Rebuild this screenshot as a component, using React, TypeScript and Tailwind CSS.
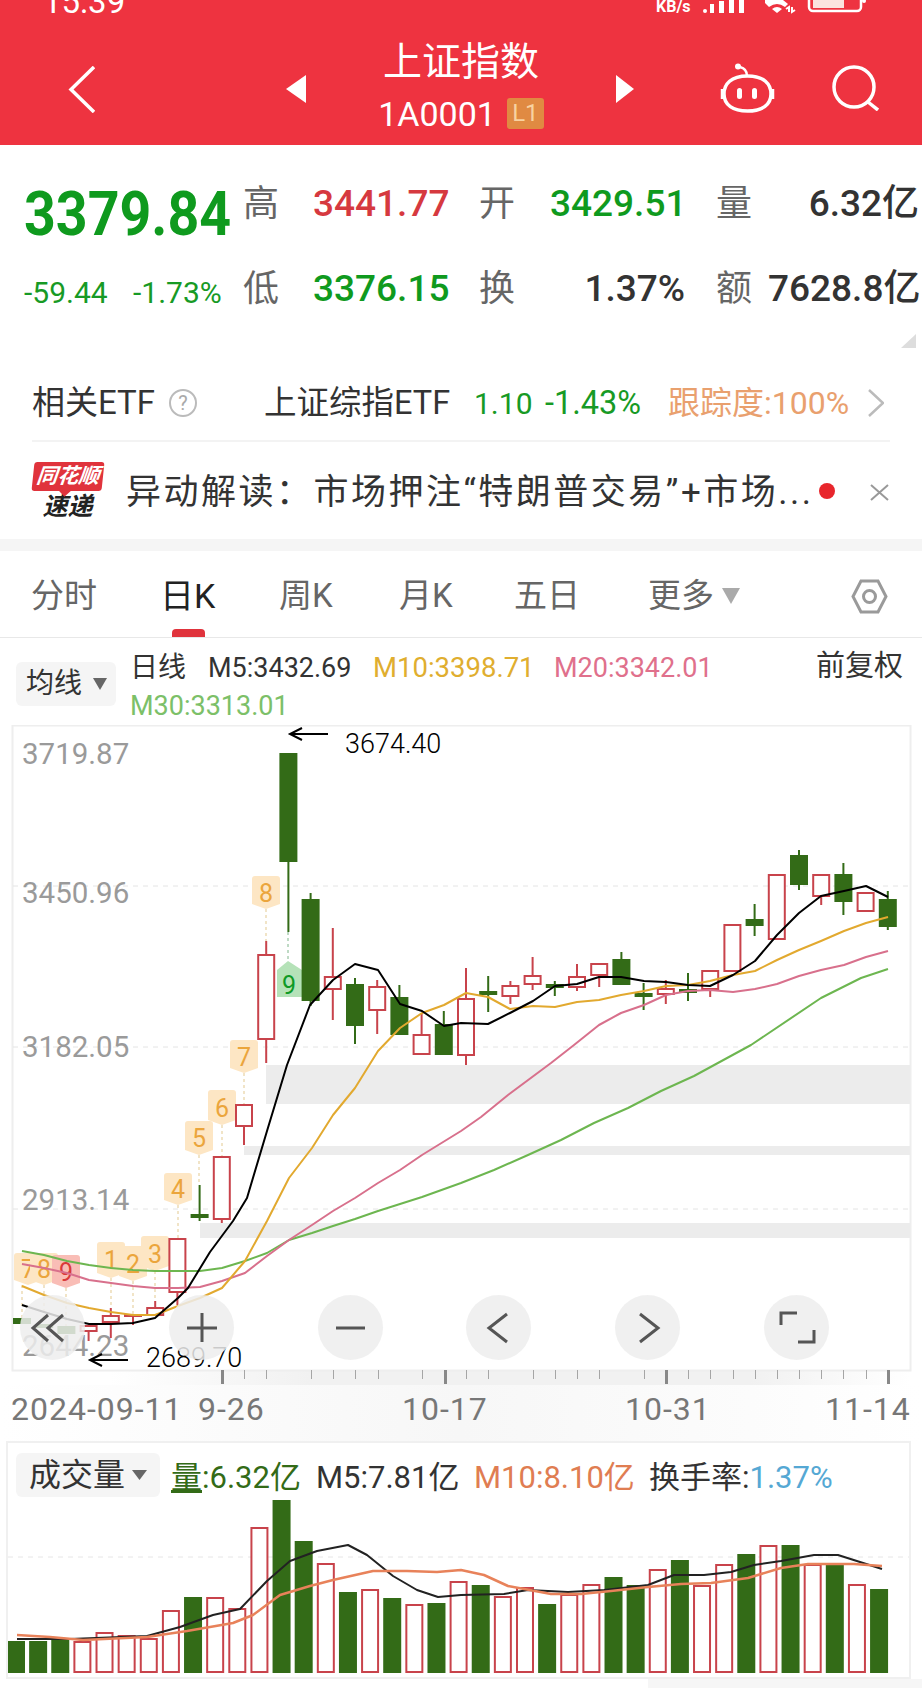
import React from 'react';

const RED = '#c8434b';
const GREEN = '#336b17';

// [kind, bodyTop, bodyBottom, wickTop, wickBottom] in page pixels
type Candle = ['r' | 'g', number, number, number, number];

const candles: Candle[] = [
  ['g', 1320, 1326, 1320, 1326],
  ['g', 1326, 1330, 1326, 1330],
  ['g', 1328, 1336, 1328, 1336],
  ['r', 1327, 1334, 1327, 1343],
  ['r', 1317, 1325, 1310, 1340],
  ['r', 1316, 1318, 1316, 1327],
  ['r', 1309, 1318, 1303, 1318],
  ['r', 1240, 1295, 1240, 1307],
  ['g', 1216, 1220, 1187, 1223],
  ['r', 1158, 1222, 1158, 1225],
  ['r', 1106, 1129, 1106, 1147],
  ['r', 956, 1042, 943, 1065],
  ['g', 755, 864, 755, 934],
  ['g', 901, 1003, 895, 1008],
  ['r', 978, 992, 930, 1022],
  ['g', 986, 1028, 980, 1046],
  ['r', 988, 1013, 982, 1036],
  ['g', 999, 1037, 987, 1037],
  ['r', 1036, 1057, 1015, 1057],
  ['g', 1026, 1057, 1013, 1057],
  ['r', 1000, 1058, 970, 1067],
  ['g', 993, 997, 978, 1014],
  ['r', 987, 999, 983, 1006],
  ['r', 977, 987, 959, 992],
  ['g', 986, 990, 983, 998],
  ['r', 978, 990, 966, 993],
  ['r', 965, 978, 965, 989],
  ['g', 961, 987, 954, 987],
  ['g', 995, 999, 985, 1012],
  ['r', 990, 997, 982, 1006],
  ['g', 991, 995, 975, 1003],
  ['r', 972, 992, 972, 999],
  ['r', 926, 974, 926, 974],
  ['g', 921, 928, 906, 938],
  ['r', 876, 942, 876, 942],
  ['g', 857, 887, 852, 892],
  ['r', 876, 899, 876, 907],
  ['g', 876, 904, 865, 917],
  ['r', 894, 914, 894, 914],
  ['g', 901, 929, 893, 932],
];

const m5 = '22,1307 44,1314 67,1321 89,1326 111,1326 133,1325 155,1320 178,1300 188,1290 210,1254 233,1223 247,1200 267,1133 287,1067 310,1007 333,982 355,966 378,972 400,1006 422,1013 444,1028 461,1025 488,1026 510,1015 533,1003 555,988 577,986 599,979 621,979 644,983 666,984 688,987 710,988 733,977 755,963 777,937 799,915 821,898 844,893 866,888 888,899';
const m10 = '22,1288 44,1297 67,1305 89,1310 111,1314 133,1317 155,1317 178,1308 200,1300 222,1290 245,1263 267,1223 289,1180 312,1150 333,1117 355,1090 378,1053 400,1030 422,1015 444,1007 466,995 488,999 510,1011 533,1008 555,1009 577,1004 599,1002 621,997 644,993 666,988 688,987 710,983 733,977 755,973 777,962 799,952 821,943 844,933 866,925 888,919';
const m20 = '22,1266 44,1270 67,1275 89,1282 111,1285 133,1288 155,1290 178,1290 200,1289 222,1283 245,1275 267,1258 289,1242 312,1227 333,1213 355,1200 378,1185 400,1172 422,1157 461,1133 481,1119 508,1097 551,1065 574,1047 599,1027 621,1015 644,1007 666,997 688,993 710,992 733,994 755,991 777,986 799,978 821,972 844,967 866,959 888,953';
const m30 = '22,1253 44,1257 67,1263 89,1267 111,1270 133,1272 155,1273 178,1273 200,1273 222,1270 245,1263 267,1255 289,1242 312,1235 333,1228 355,1221 378,1213 400,1206 422,1199 461,1185 494,1172 528,1157 561,1142 594,1125 628,1110 661,1093 694,1078 751,1047 821,1000 861,980 888,971';

// [number, centre x, top, bottom, connector x, connector end]
const badges: [string, number, number, number, number, number][] = [
  ['7', 28, 1255, 1287, 22, 1320],
  ['8', 44, 1255, 1287, 44, 1322],
  ['1', 111, 1244, 1280, 111, 1310],
  ['2', 133, 1248, 1283, 133, 1316],
  ['3', 155, 1238, 1273, 155, 1303],
  ['4', 178, 1175, 1207, 178, 1240],
  ['5', 199, 1123, 1157, 199, 1187],
  ['6', 222, 1092, 1127, 222, 1158],
  ['7', 244, 1042, 1075, 244, 1106],
  ['8', 266, 878, 911, 266, 943],
];

const axisLabels: [string, number][] = [
  ['3719.87', 766],
  ['3450.96', 905],
  ['3182.05', 1059],
  ['2913.14', 1212],
  ['2644.23', 1358],
];

const thinTicks = [244, 266, 311, 333, 355, 378, 422, 466, 488, 533, 555, 577, 599, 644, 688, 710, 733, 755, 777, 799, 821, 843, 866];
const thickTicks = [222, 445, 666, 888];

const volumes: ['r' | 'g', number][] = [
  ['g', 1643], ['g', 1643], ['g', 1642], ['r', 1643], ['r', 1634], ['r', 1637], ['r', 1640], ['r', 1612],
  ['g', 1599], ['r', 1599], ['r', 1610], ['r', 1529], ['g', 1502], ['g', 1543], ['r', 1565], ['g', 1594],
  ['r', 1591], ['g', 1600], ['r', 1606], ['g', 1605], ['r', 1583], ['g', 1587], ['r', 1598], ['r', 1589],
  ['g', 1606], ['r', 1596], ['r', 1586], ['g', 1579], ['g', 1587], ['r', 1571], ['g', 1562], ['r', 1587],
  ['r', 1566], ['g', 1556], ['r', 1547], ['g', 1547], ['r', 1566], ['g', 1567], ['r', 1586], ['g', 1591],
];

const volM5 = '17,1641 70,1641 147,1638 180,1629 213,1617 240,1611 267,1583 290,1563 317,1553 348,1547 367,1557 393,1578 417,1592 438,1599 461,1597 504,1596 528,1592 568,1594 604,1592 648,1587 674,1577 704,1577 731,1574 754,1567 781,1563 814,1557 838,1557 882,1571';
const volM10 = '17,1637 50,1639 83,1642 147,1639 187,1633 233,1625 253,1617 280,1597 310,1588 333,1582 373,1573 407,1573 437,1574 461,1572 484,1577 508,1588 551,1596 581,1596 611,1593 648,1589 681,1586 711,1585 748,1580 781,1570 808,1566 854,1566 882,1568';

function CircleButton({ children }: { children: React.ReactNode }) {
  return (
    <div className="w-[65px] h-[65px] rounded-full bg-[#ededed]/85 flex items-center justify-center">
      <svg width="65" height="65" viewBox="0 0 65 65" fill="none" stroke="#555" strokeWidth="3">
        {children}
      </svg>
    </div>
  );
}

function Badge({ n, cx, top, bottom, fill, color }: { n: string; cx: number; top: number; bottom: number; fill: string; color: string }) {
  const w = 14;
  return (
    <g>
      <path
        d={`M${cx - w + 3} ${top} H${cx + w - 3} Q${cx + w} ${top} ${cx + w} ${top + 3} V${bottom - 5} L${cx} ${bottom} L${cx - w} ${bottom - 5} V${top + 3} Q${cx - w} ${top} ${cx - w + 3} ${top} Z`}
        fill={fill}
      />
      <text x={cx} y={(top + bottom) / 2 + 9} textAnchor="middle" fill={color} className="text-[25px]">
        {n}
      </text>
    </g>
  );
}

function KChart() {
  return (
    <div className="relative h-[660px]">
      <svg width="922" height="660" viewBox="0 727 922 660" className="block">
        <defs>
          <linearGradient id="axisFade" x1="0" x2="1" y1="0" y2="0">
            <stop offset="0" stopColor="#f1f1f1" stopOpacity="0" />
            <stop offset="0.25" stopColor="#f1f1f1" />
            <stop offset="0.8" stopColor="#f1f1f1" />
            <stop offset="1" stopColor="#f1f1f1" stopOpacity="0" />
          </linearGradient>
        </defs>
        <rect x="110" y="1373" width="800" height="14" fill="url(#axisFade)" />
        <rect x="12.5" y="727.5" width="898" height="645" fill="none" stroke="#eeeeee" strokeWidth="2" />

        {[888, 1049, 1211].map((y) => (
          <line key={y} x1="13" x2="910" y1={y} y2={y} stroke="#e4e4e4" strokeDasharray="5 5" />
        ))}

        <rect x="266" y="1067" width="644" height="39" fill="#ececec" />
        <rect x="244" y="1148" width="666" height="9" fill="#ececec" />
        <rect x="200" y="1225" width="710" height="15" fill="#ececec" />

        {axisLabels.map(([t, y]) => (
          <text key={t} x="22" y={y} fill="#9a9a9a" className="text-[29.5px]">
            {t}
          </text>
        ))}

        {badges.map(([, , , bottom, lineX, end], i) => (
          <line key={i} x1={lineX} x2={lineX} y1={bottom} y2={end} stroke="#e3c98f" strokeDasharray="3 3" />
        ))}
        <line x1="66" x2="66" y1="1290" y2="1328" stroke="#e3c98f" strokeDasharray="3 3" />
        <line x1="288" x2="288" y1="934" y2="963" stroke="#7fb58a" strokeDasharray="3 3" />

        {badges.map(([n, cx, top, bottom], i) => (
          <Badge key={i} n={n} cx={cx} top={top} bottom={bottom} fill="#fde6c4" color="#eba53c" />
        ))}
        <Badge n="9" cx={66} top={1257} bottom={1290} fill="#f9bdb6" color="#d93a3a" />

        <path d="M277 999 V972 L288 963 L302 972 V999 Z" fill="#b5e2b8" />
        <text x="289" y="996" textAnchor="middle" fill="#0f9a25" className="text-[25px]">
          9
        </text>

        {candles.map(([kind, top, bottom, wickTop, wickBottom], i) => {
          const x = 22 + 22.2 * i;
          const color = kind === 'r' ? RED : GREEN;
          return (
            <g key={i}>
              <rect x={x - 1} y={wickTop} width="2" height={wickBottom - wickTop} fill={color} />
              {kind === 'r' ? (
                <rect x={x - 8} y={top + 1} width="16" height={Math.max(bottom - top - 2, 1)} fill="#fff" stroke={color} strokeWidth="2" />
              ) : (
                <rect x={x - 9} y={top} width="18" height={bottom - top} fill={color} />
              )}
            </g>
          );
        })}

        <polyline points={m30} fill="none" stroke="#6db650" strokeWidth="2" strokeLinejoin="round" />
        <polyline points={m20} fill="none" stroke="#d8708c" strokeWidth="2" strokeLinejoin="round" />
        <polyline points={m10} fill="none" stroke="#e2a92f" strokeWidth="2" strokeLinejoin="round" />
        <polyline points={m5} fill="none" stroke="#000" strokeWidth="2" strokeLinejoin="round" />

        <g fill="none" stroke="#000" strokeWidth="2">
          <path d="M328 736 H291 M302 730 L290 736 L302 742" />
          <path d="M128 1362 H91 M102 1356 L90 1362 L102 1368" />
        </g>
        <text x="345" y="755" fill="#000" className="text-[27px] font-light">
          3674.40
        </text>
        <text x="146" y="1369" fill="#000" className="text-[27px] font-light">
          2689.70
        </text>

        {thinTicks.map((x) => (
          <rect key={x} x={x} y="1372" width="1" height="9" fill="#a5a5a5" />
        ))}
        {thickTicks.map((x) => (
          <rect key={x} x={x - 1} y="1372" width="3" height="14" fill="#888" />
        ))}
      </svg>

      {/* controls float over the candles */}
      <div className="absolute left-[20px] top-[570px] w-[809px] flex justify-between">
        <CircleButton>
          <path d="M28 20 L13 33 L28 46 M43 20 L28 33 L43 46" />
        </CircleButton>
        <CircleButton>
          <path d="M33 18 V47 M18 33 H48" />
        </CircleButton>
        <CircleButton>
          <path d="M18 33 H47" />
        </CircleButton>
        <CircleButton>
          <path d="M41 19 L23 33 L41 47" />
        </CircleButton>
        <CircleButton>
          <path d="M25 19 L43 33 L25 47" />
        </CircleButton>
        <CircleButton>
          <path d="M17 30 V18 H33 M50 35 V47 H34" />
        </CircleButton>
      </div>
    </div>
  );
}

function VolumeChart() {
  return (
    <svg width="901" height="183" viewBox="8 1498 901 183" className="block">
      <line x1="8" x2="909" y1="1559" y2="1559" stroke="#e6e6e6" strokeDasharray="5 5" />
      {volumes.map(([kind, top], i) => {
        const x = 16 + 22.13 * i;
        return kind === 'g' ? (
          <rect key={i} x={x - 9} y={top} width="18" height={1675 - top} fill={GREEN} />
        ) : (
          <rect key={i} x={x - 8} y={top + 1} width="16" height={1673 - top} fill="#fff" stroke={RED} strokeWidth="2" />
        );
      })}
      <polyline points={volM5} fill="none" stroke="#222" strokeWidth="2" strokeLinejoin="round" />
      <polyline points={volM10} fill="none" stroke="#e8825a" strokeWidth="2.5" strokeLinejoin="round" />
    </svg>
  );
}

export default function App() {
  return (
    <div className="w-[922px] h-[1690px] overflow-hidden bg-white text-[#333] font-[Roboto,'Noto_Sans_CJK_SC',sans-serif]">
      {/* red header */}
      <header className="h-[145px] bg-[#ee3340] text-white">
        <div className="h-[14px] overflow-hidden flex items-end pl-[43px]">
          <span className="text-[33px] leading-[33px] w-[613px] mb-[-4px] whitespace-nowrap">15:39</span>
          <span className="text-[16px] leading-[16px] font-bold w-[47px] mb-[-1px]">KB/s</span>
          <svg width="165" height="14" viewBox="0 0 165 14" fill="#fff">
            <rect x="0" y="9" width="4" height="4" rx="2" />
            <rect x="7" y="4" width="4" height="9" />
            <rect x="16" y="1" width="5" height="12" />
            <rect x="26" y="0" width="5" height="13" />
            <rect x="36" y="0" width="5" height="13" />
            <path d="M62 0 H80 L85 4 L82 7 Q74 1 66 7 L62 3 Z" />
            <path d="M69 9 Q74 5 79 9 L74 13 Z" />
            <path d="M86 12 V7 L83 9 M89 7 V12 L92 10" fill="none" stroke="#fff" strokeWidth="2" />
            <rect x="106" y="-8" width="52" height="19" rx="4" fill="none" stroke="#fff" strokeWidth="2.5" />
            <rect x="110" y="-4" width="31" height="12" fill="#fbe3df" />
            <circle cx="161" cy="1" r="2" />
          </svg>
        </div>
        <nav className="h-[131px] pt-[19px] pl-[68px] flex items-center">
          <svg width="27" height="47" viewBox="0 0 27 47" fill="none" stroke="#fff" strokeWidth="3.5">
            <path d="M26 1 L3 23.5 L26 46" />
          </svg>
          <svg className="ml-[191px]" width="20" height="28" viewBox="0 0 20 28" fill="#fff">
            <path d="M20 0 V28 L0 14 Z" />
          </svg>
          <div className="w-[310px] flex flex-col items-center">
            <div className="text-[39px] leading-[46px] h-[57px] -mt-[8px]">上证指数</div>
            <div className="flex items-center gap-[11px] h-[36px]">
              <span className="text-[34px] leading-[36px]">1A0001</span>
              <span className="w-[37px] h-[31px] rounded-[3px] bg-[#e08a42] text-[#f8d2a0] text-[24px] leading-[31px] text-center">L1</span>
            </div>
          </div>
          <svg width="18" height="28" viewBox="0 0 18 28" fill="#fff">
            <path d="M0 0 V28 L18 14 Z" />
          </svg>
          <svg className="ml-[86px] -mt-[2px]" width="55" height="50" viewBox="0 0 55 50" fill="none" stroke="#fff" strokeWidth="3.5">
            <path d="M27.5 13 C11 13 4 21 4 31 C4 42 13 48 27.5 48 C42 48 51 42 51 31 C51 21 44 13 27.5 13 Z" />
            <path d="M27 13 C27 8 24 5 20 4" strokeWidth="2.5" />
            <circle cx="18" cy="3.5" r="3" fill="#fff" stroke="none" />
            <rect x="17" y="25" width="5" height="11" rx="2.5" fill="#fff" stroke="none" />
            <rect x="32" y="25" width="5" height="11" rx="2.5" fill="#fff" stroke="none" />
            <path d="M2 26 V36 M53 26 V36" strokeWidth="2.5" />
          </svg>
          <svg className="ml-[57px] -mt-[2px]" width="47" height="46" viewBox="0 0 47 46" fill="none" stroke="#fff" strokeWidth="3.5">
            <circle cx="22" cy="22" r="20" />
            <path d="M36 37 L46 45" />
          </svg>
        </nav>
      </header>

      {/* quote block */}
      <section className="relative h-[205px] pt-[16px] flex">
        <div className="w-[243px] pl-[24px]">
          <div className="text-[55.5px] leading-[60px] mt-[24px] font-bold text-[#0f9a1e] origin-left scale-y-[1.1]">3379.84</div>
          <div className="mt-[31px] text-[30px] leading-[34px] text-[#179a25] flex">
            <span className="w-[109px]">-59.44</span>
            <span className="whitespace-nowrap">-1.73%</span>
          </div>
        </div>
        <div className="grid grid-cols-[70px_166px_71px_135px_83px_151px] grid-rows-[85px_85px] items-center text-[37px] leading-[44px] font-medium">
          <span className="font-normal text-[#666] text-[36px]">高</span>
          <span className="text-[#d6393f]">3441.77</span>
          <span className="font-normal text-[#666] text-[36px]">开</span>
          <span className="text-[#0f9a1e]">3429.51</span>
          <span className="pl-[31px] font-normal text-[#666] text-[36px]">量</span>
          <span className="text-right whitespace-nowrap">6.32亿</span>
          <span className="font-normal text-[#666] text-[36px]">低</span>
          <span className="text-[#0f9a1e]">3376.15</span>
          <span className="font-normal text-[#666] text-[36px]">换</span>
          <span className="text-right">1.37%</span>
          <span className="pl-[31px] font-normal text-[#666] text-[36px]">额</span>
          <span className="text-right whitespace-nowrap">7628.8亿</span>
        </div>
        <div className="absolute right-[6px] bottom-[2px] w-0 h-0 border-l-[15px] border-l-transparent border-b-[14px] border-b-[#dddddd]" />
      </section>

      {/* related ETF */}
      <section className="mx-[32px] h-[92px] pt-[16px] border-b-2 border-[#f3f3f3] flex items-center text-[32.5px] whitespace-nowrap">
        <span className="w-[137px] text-[33px]">相关ETF</span>
        <span className="w-[28px] h-[28px] rounded-full border-2 border-[#bbb] text-[#aaa] text-[20px] leading-[24px] text-center">?</span>
        <span className="ml-[67px] w-[210px]">上证综指ETF</span>
        <span className="w-[71px] text-[#179a25] text-[30px]">1.10</span>
        <span className="w-[123px] text-[#179a25]">-1.43%</span>
        <span className="w-[200px] text-[#e9a06e] text-[32px]">跟踪度:100%</span>
        <svg width="16" height="28" viewBox="0 0 16 28" fill="none" stroke="#bbb" strokeWidth="2.5">
          <path d="M1 1 L15 14 L1 27" />
        </svg>
      </section>

      {/* news strip */}
      <section className="h-[97px] pl-[32px] flex items-center">
        <div className="w-[71px] flex flex-col items-center">
          <div className="relative w-[70px] h-[29px] rounded-[3px] -skew-x-6 bg-[#e0333c] text-white text-[21px] leading-[29px] font-bold italic text-center whitespace-nowrap">
            同花顺
            <span className="absolute left-[29px] bottom-[-4px] w-[9px] h-[9px] rotate-45 bg-[#e0333c]" />
          </div>
          <div className="mt-[3px] text-[#222] text-[25px] leading-[25px] font-bold italic whitespace-nowrap">速递</div>
        </div>
        <div className="ml-[23px] mt-[5px] w-[693px] text-[35px] tracking-[2.5px] whitespace-nowrap text-[#333]">异动解读：市场押注“特朗普交易”+市场...</div>
        <span className="w-[16px] h-[16px] rounded-full bg-[#e8262c]" />
        <svg className="ml-[35px] mt-[3px]" width="19" height="17" viewBox="0 0 19 17" fill="none" stroke="#999" strokeWidth="2">
          <path d="M1 1 L18 16 M18 1 L1 16" />
        </svg>
      </section>

      <div className="h-[12px] bg-[#f5f5f5]" />

      {/* period tabs */}
      <section className="relative h-[87px] pl-[31px] pt-[4px] border-b border-[#e8e8e8] flex items-center text-[33px] text-[#666] whitespace-nowrap">
        <span className="w-[129px]">分时</span>
        <span className="w-[119px] text-[#222] text-[34px]">日K</span>
        <span className="absolute left-[172px] bottom-0 w-[33px] h-[8px] rounded-t-[4px] bg-[#e0333c]" />
        <span className="w-[120px]">周K</span>
        <span className="w-[115px]">月K</span>
        <span className="w-[134px]">五日</span>
        <span className="w-[74px]">更多</span>
        <svg width="18" height="18" viewBox="0 0 18 18" fill="#aaa">
          <path d="M0 1 H18 L9 17 Z" />
        </svg>
        <svg className="ml-[111px]" width="37" height="35" viewBox="0 0 37 35" fill="none" stroke="#9a9a9a" strokeWidth="3">
          <path d="M10 2 H27 L35 17.5 L27 33 H10 L2 17.5 Z" />
          <circle cx="18.5" cy="17.5" r="6" />
        </svg>
      </section>

      {/* moving average legend */}
      <section className="h-[87px] pl-[16px] flex">
        <div className="mt-[24px] w-[100px] h-[44px] rounded-[6px] bg-[#f5f5f5] pl-[10px] flex items-center text-[28px]">
          <span className="w-[67px]">均线</span>
          <svg width="14" height="12" viewBox="0 0 14 12" fill="#666">
            <path d="M0 0 H14 L7 12 Z" />
          </svg>
        </div>
        <div className="ml-[14px] text-[27px] leading-[38px] whitespace-nowrap pt-[11px]">
          <div className="flex">
            <span className="w-[78px] text-[28px]">日线</span>
            <span className="w-[165px]">M5:3432.69</span>
            <span className="w-[181px] text-[#e0ae2f] text-[27.5px]">M10:3398.71</span>
            <span className="w-[262px] text-[#e0708c]">M20:3342.01</span>
            <span className="text-[29px] -mt-[2px]">前复权</span>
          </div>
          <div className="text-[#7cc068]">M30:3313.01</div>
        </div>
      </section>

      <KChart />

      {/* date axis */}
      <section className="h-[56px] pl-[11px] pt-[4px] bg-gradient-to-r from-white via-[#f7f7f7] to-white flex text-[32px] tracking-[1px] leading-[40px] text-[#777] whitespace-nowrap">
        <span className="w-[187px]">2024-09-11</span>
        <span className="w-[204px]">9-26</span>
        <span className="w-[223px]">10-17</span>
        <span className="w-[200px]">10-31</span>
        <span>11-14</span>
      </section>

      {/* volume panel */}
      <section className="ml-[6px] w-[905px] border-t-2 border-x-2 border-[#f0f0f0] h-[238px] border-b-2">
        <div className="h-[53px] pt-[10px] pl-[8px] flex whitespace-nowrap text-[31px]">
          <div className="w-[144px] h-[44px] rounded-[6px] bg-[#f5f5f5] pl-[13px] flex items-center">
            <span className="text-[32px] w-[103px]">成交量</span>
            <svg width="15" height="10" viewBox="0 0 15 10" fill="#666">
              <path d="M0 0 H15 L7.5 10 Z" />
            </svg>
          </div>
          <div className="ml-[11px] mt-[3px] flex items-center h-[44px]">
            <span className="text-[#336b17] w-[145px]"><span className="underline">量</span>:6.32亿</span>
            <span className="w-[158px]">M5:7.81亿</span>
            <span className="w-[175px] text-[#e07d52]">M10:8.10亿</span>
            <span>换手率:</span>
            <span className="text-[#55a8d4]">1.37%</span>
          </div>
        </div>
        <VolumeChart />
      </section>
      <div className="ml-[648px] h-[9px] bg-[#f6f6f6]" />
    </div>
  );
}
